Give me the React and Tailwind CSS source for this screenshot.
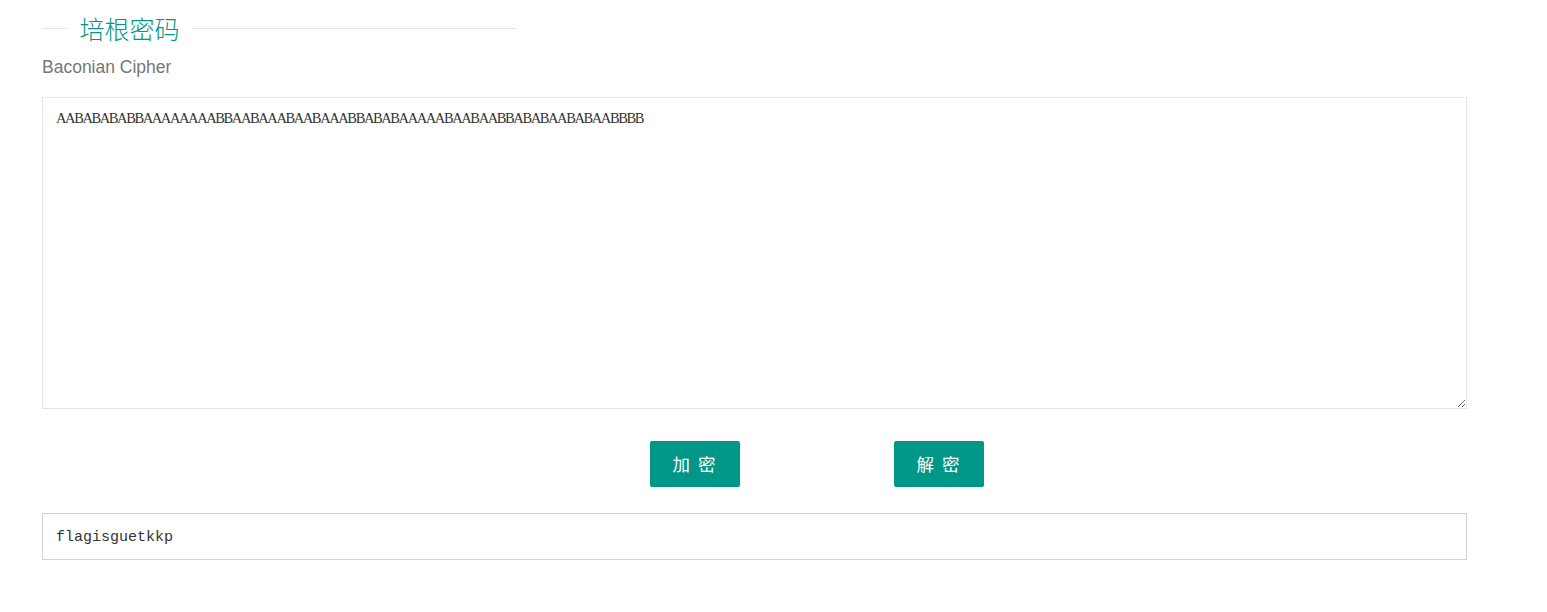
import React from "react";

const CIPHER =
  "AABABABABBAAAAAAAABBAABAAABAABAAABBABABAAAAABAABAABBABABAABABAABBBB";

export default function App() {
  return (
    <div className="w-[1547px] h-[612px] bg-white overflow-hidden pl-[42px] pr-[80px] font-['Liberation_Sans','Noto_Sans_CJK_SC',sans-serif]">
      {/* title */}
      <div className="mt-[13px] h-[30px] w-[475px] flex items-center">
        <div className="w-[25px] h-px bg-[#e6e6e6]" />
        <div className="px-[12.5px] text-[25px] leading-[30px] font-light text-[#009688] font-['Noto_Sans_CJK_SC',sans-serif]">
          培根密码
        </div>
        <div className="flex-1 h-px bg-[#e6e6e6]" />
      </div>

      <div className="mt-[12px] h-[24px] leading-[24px] text-[17.5px] text-[#777777]">
        Baconian Cipher
      </div>

      <textarea
        defaultValue={CIPHER}
        className="mt-[18px] block w-full h-[312px] border border-[#e6e6e6] bg-white pl-[13px] pr-[12px] pt-[8px] pb-[7px] text-[14.5px] leading-[25px] tracking-[-1.4px] text-[#333333] outline-none resize font-['Liberation_Serif',serif]"
      />

      <div className="mt-[32px] flex pl-[608px] gap-[154px]">
        <button className="w-[90px] h-[46px] rounded-[2px] bg-[#009688] text-white text-[17.5px] tracking-[2px] font-['Noto_Sans_CJK_SC',sans-serif]">
          加 密
        </button>
        <button className="w-[90px] h-[46px] rounded-[2px] bg-[#009688] text-white text-[17.5px] tracking-[2px] font-['Noto_Sans_CJK_SC',sans-serif]">
          解 密
        </button>
      </div>

      <div className="mt-[26px] h-[47px] w-full border border-[#d2d2d2] flex items-center pl-[13px] pt-[4px] text-[15px] text-[#333333] font-['Liberation_Mono',monospace]">
        flagisguetkkp
      </div>
    </div>
  );
}
